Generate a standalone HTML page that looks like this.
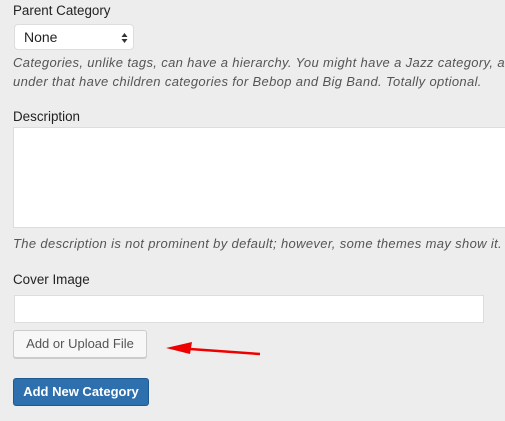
<!DOCTYPE html>
<html><head><style>
body{margin:0;width:505px;height:421px;background:#ededed;font-family:"Liberation Sans",Arial,sans-serif;color:#222;position:relative;overflow:hidden}
.a{position:absolute;white-space:nowrap}
.lbl{font-size:13.4px}
.it{font-size:13px;letter-spacing:0.35px;font-style:italic;color:#555}
</style></head><body>
<div class="a lbl" style="left:13px;top:3px">Parent Category</div>
<div class="a" style="left:14px;top:24px;width:120px;height:26px;background:#fff;border:1px solid #ddd;border-radius:4px;box-sizing:border-box;font-size:14px;line-height:24px;padding-left:9px">None
<svg style="position:absolute;right:5px;top:7px" width="7" height="12"><path d="M0.5 5L3.5 1L6.5 5Z M0.5 7L3.5 11L6.5 7Z" fill="#333"/></svg></div>
<div class="a it" style="left:13px;top:55px">Categories, unlike tags, can have a hierarchy. You might have a Jazz category, and</div>
<div class="a it" style="left:13px;top:74px">under that have children categories for Bebop and Big Band. Totally optional.</div>
<div class="a lbl" style="left:13px;top:109px">Description</div>
<div class="a" style="left:13px;top:127px;width:500px;height:101px;background:#fff;border:1px solid #ddd;box-sizing:border-box"></div>
<div class="a it" style="left:13px;top:236px">The description is not prominent by default; however, some themes may show it.</div>
<div class="a lbl" style="left:13px;top:272px">Cover Image</div>
<div class="a" style="left:14px;top:295px;width:470px;height:28px;background:#fff;border:1px solid #ddd;box-sizing:border-box"></div>
<div class="a" style="left:13px;top:330px;width:134px;height:28px;background:#f7f7f7;border:1px solid #ccc;border-radius:3px;box-sizing:border-box;box-shadow:0 1px 0 #ccc;font-size:13px;line-height:26px;text-align:center;color:#555">Add or Upload File</div>
<svg class="a" style="left:0;top:0" width="505" height="421"><path d="M176 348L260 354" stroke="#e00" stroke-width="2.5"/><path d="M166 348L192 342L190 354Z" fill="#e00"/></svg>
<div class="a" style="left:13px;top:378px;width:136px;height:28px;background:#2e6fae;border:1px solid #1d5a92;border-radius:3px;box-sizing:border-box;font-size:13px;font-weight:bold;line-height:26px;text-align:center;color:#fff">Add New Category</div>
</body></html>
